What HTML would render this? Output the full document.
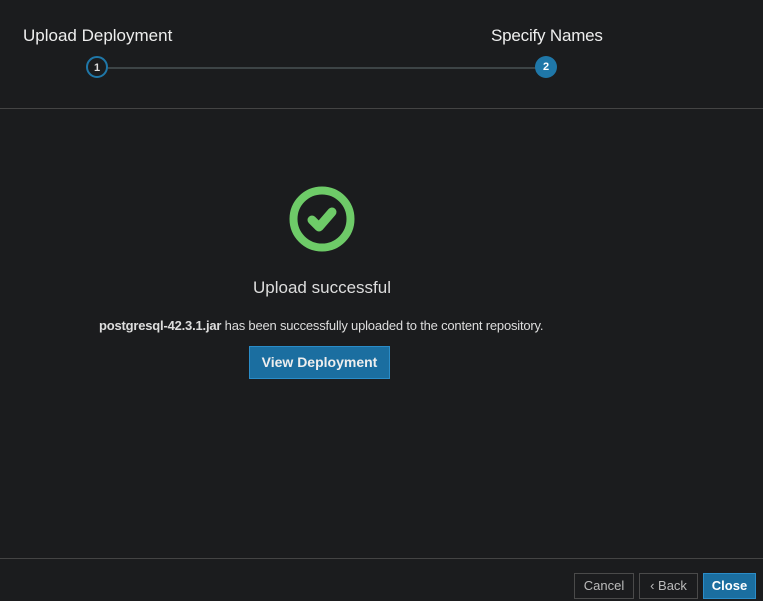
<!DOCTYPE html>
<html><head><style>
body{margin:0;width:763px;height:601px;background:#1b1c1e;font-family:"Liberation Sans",sans-serif;color:#e8e8e8;position:relative;overflow:hidden}
.a{position:absolute}
.step{font-size:17px;color:#eee}
.c{width:22px;height:22px;border-radius:50%;box-sizing:border-box;font-size:11px;font-weight:bold;text-align:center;line-height:20px}
.btn{box-sizing:border-box;height:26px;font-size:13px;text-align:center;line-height:24px}
</style></head><body>
<div class="a step" style="left:23px;top:26px">Upload Deployment</div>
<div class="a step" style="left:491px;top:26px;letter-spacing:-0.2px">Specify Names</div>
<div class="a" style="left:108px;top:67px;width:428px;height:2px;background:#3d4446"></div>
<div class="a c" style="left:86px;top:56px;border:2px solid #1f77a8;color:#ddd">1</div>
<div class="a c" style="left:535px;top:56px;background:#1f77a8;color:#fff;line-height:22px">2</div>
<div class="a" style="left:0;top:108px;width:763px;height:1px;background:#444"></div>
<svg class="a" style="left:288px;top:185px" width="68" height="68" viewBox="0 0 68 68">
<circle cx="34" cy="34" r="28.5" fill="none" stroke="#6ecb68" stroke-width="8"/>
<path d="M24 35 L31 42 L44 27" fill="none" stroke="#6ecb68" stroke-width="9" stroke-linecap="round" stroke-linejoin="round"/>
</svg>
<div class="a" style="left:0;width:644px;top:278px;text-align:center;font-size:17px;color:#ddd">Upload successful</div>
<div class="a" style="left:99px;top:318px;font-size:13px;color:#ddd;letter-spacing:-0.2px"><b>postgresql-42.3.1.jar</b> has been successfully uploaded to the content repository.</div>
<div class="a btn" style="left:249px;top:346px;width:141px;height:33px;line-height:31px;background:#1b6ea0;border:1px solid #2a8cc8;font-weight:bold;font-size:14px;color:#eee">View Deployment</div>
<div class="a" style="left:0;top:558px;width:763px;height:1px;background:#444"></div>
<div class="a btn" style="left:574px;top:573px;width:60px;border:1px solid #4a4a4a;color:#bbb">Cancel</div>
<div class="a btn" style="left:639px;top:573px;width:59px;border:1px solid #4a4a4a;color:#bbb">‹ Back</div>
<div class="a btn" style="left:703px;top:573px;width:53px;background:#1b6ea0;border:1px solid #2a8cc8;color:#fff;font-weight:bold">Close</div>
</body></html>
